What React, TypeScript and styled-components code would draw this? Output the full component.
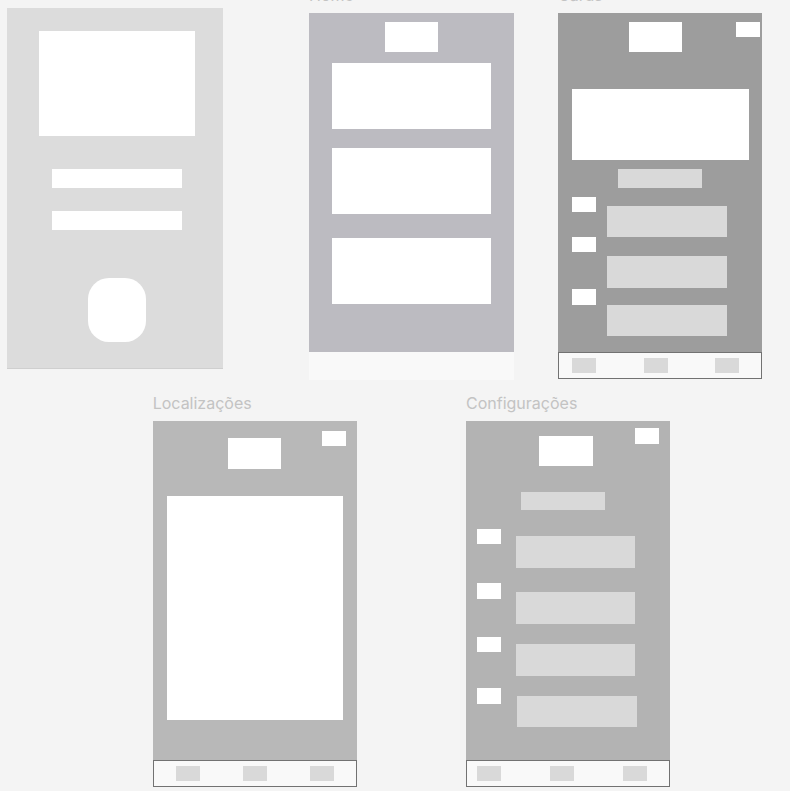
import React from "react";
import styled, { createGlobalStyle, css } from "styled-components";

const Global = createGlobalStyle`
  html, body { margin: 0; padding: 0; background: #f4f4f4; }
  body { font-family: Inter, "Noto Sans", sans-serif; }
`;

type Offset = { $mt?: number; $ml?: number };
const offset = css<Offset>`
  flex: none;
  margin-top: ${(p) => p.$mt ?? 0}px;
  margin-left: ${(p) => p.$ml ?? 0}px;
`;

const Canvas = styled.div`
  position: relative;
  width: 790px;
  height: 791px;
  overflow: hidden;
  background: #f4f4f4;
`;

const FrameGroup = styled.div<{ $x: number; $y: number; $w: number }>`
  position: absolute;
  left: ${(p) => p.$x}px;
  top: ${(p) => p.$y}px;
  width: ${(p) => p.$w}px;
  display: flex;
  flex-direction: column;
`;

const FrameLabel = styled.div`
  height: 18px;
  margin-bottom: 9px;
  font-size: 16px;
  line-height: 18px;
  color: #c3c3c3;
  white-space: nowrap;
`;

const Screen = styled.div<{ $bg: string; $h: number; $pt?: number; $center?: boolean; $pl?: number }>`
  box-sizing: border-box;
  height: ${(p) => p.$h}px;
  background: ${(p) => p.$bg};
  padding-top: ${(p) => p.$pt ?? 0}px;
  padding-left: ${(p) => p.$pl ?? 0}px;
  display: flex;
  flex-direction: column;
  align-items: ${(p) => (p.$center ? "center" : "flex-start")};
`;

const LoginScreen = styled(Screen)`
  box-shadow: 0 1px 0 #cfcfcf;
`;

const Footer = styled.div`
  height: 28px;
  background: #f9f9f9;
`;

const NavBar = styled.div<{ $pl: number; $pr: number }>`
  box-sizing: border-box;
  height: 27px;
  background: #f9f9f9;
  border: 1px solid #727272;
  display: flex;
  align-items: center;
  justify-content: space-between;
  padding: 0 ${(p) => p.$pr - 1}px 0 ${(p) => p.$pl - 1}px;
`;

const NavItem = styled.div`
  width: 24px;
  height: 15px;
  background: #d9d9d9;
`;

const Header = styled.div<{ $pl: number; $pt: number }>`
  display: flex;
  align-items: flex-start;
  padding-left: ${(p) => p.$pl}px;
  padding-top: ${(p) => p.$pt}px;
`;

const Logo = styled.div<Offset>`
  ${offset};
  width: 53.3px;
  height: 30.4px;
  background: #ffffff;
`;

const Corner = styled.div<Offset>`
  ${offset};
  width: 24px;
  height: 15.4px;
  background: #ffffff;
`;

const Hero = styled.div<Offset & { $w: number; $h: number }>`
  ${offset};
  width: ${(p) => p.$w}px;
  height: ${(p) => p.$h}px;
  background: #ffffff;
`;

const InputBar = styled.div<Offset>`
  ${offset};
  width: 129.3px;
  height: 18.7px;
  background: #ffffff;
`;

const RoundButton = styled.div<Offset>`
  ${offset};
  width: 57.7px;
  height: 64px;
  border-radius: 21px;
  background: #ffffff;
`;

const Card = styled.div<Offset>`
  ${offset};
  width: 158.4px;
  height: 65.7px;
  background: #ffffff;
`;

const Pill = styled.div<Offset>`
  ${offset};
  width: 83.5px;
  height: 18.2px;
  background: #d9d9d9;
`;

const List = styled.div<Offset>`
  ${offset};
  display: flex;
  align-items: flex-start;
`;

const Column = styled.div<Offset>`
  ${offset};
  display: flex;
  flex-direction: column;
  align-items: flex-start;
`;

const RowIcon = styled.div<Offset>`
  ${offset};
  width: 24px;
  height: 15.5px;
  background: #ffffff;
`;

const Field = styled.div<Offset>`
  ${offset};
  width: 119.6px;
  height: 31.5px;
  background: #d9d9d9;
`;

export default function App() {
  return (
    <>
      <Global />
      <Canvas>
        {/* Login */}
        <FrameGroup $x={7} $y={8} $w={216}>
          <LoginScreen $bg="#dcdcdc" $h={359.5} $pt={22.7} $pl={4} $center>
            <Hero $w={156.7} $h={105} />
            <InputBar $mt={33.3} />
            <InputBar $mt={23.3} />
            <RoundButton $mt={48} />
          </LoginScreen>
        </FrameGroup>

        {/* Home */}
        <FrameGroup $x={309} $y={13.3 - 27} $w={205}>
          <FrameLabel>Home</FrameLabel>
          <Screen $bg="#bcbbc1" $h={338.4} $pt={8.4} $center>
            <Logo />
            <Card $mt={10.9} />
            <Card $mt={19.3} />
            <Card $mt={24.7} />
          </Screen>
          <Footer />
        </FrameGroup>

        {/* Cards */}
        <FrameGroup $x={558} $y={13.3 - 27} $w={204.3}>
          <FrameLabel>Cards</FrameLabel>
          <Screen $bg="#9d9d9d" $h={338.7}>
            <Header $pl={70.7} $pt={8.7}>
              <Logo />
              <Corner $ml={54.3} />
            </Header>
            <Hero $ml={14} $mt={36.7} $w={176.7} $h={70.7} />
            <Pill $ml={60.3} $mt={9.6} />
            <List $mt={9}>
              <Column $ml={14}>
                <RowIcon />
                <RowIcon $mt={24.7} />
                <RowIcon $mt={37} />
              </Column>
              <Column $ml={11.3}>
                <Field $mt={9} />
                <Field $mt={19} />
                <Field $mt={17} />
              </Column>
            </List>
          </Screen>
          <NavBar $pl={14} $pr={23.3}>
            <NavItem />
            <NavItem />
            <NavItem />
          </NavBar>
        </FrameGroup>

        {/* Localizações */}
        <FrameGroup $x={152.7} $y={421 - 27} $w={204.3}>
          <FrameLabel>Localizações</FrameLabel>
          <Screen $bg="#b8b8b8" $h={339}>
            <Header $pl={75.3} $pt={9.7}>
              <Logo $mt={7.6} />
              <Corner $ml={40.7} />
            </Header>
            <Hero $ml={14} $mt={27.7} $w={176.3} $h={223.3} />
          </Screen>
          <NavBar $pl={23} $pr={23}>
            <NavItem />
            <NavItem />
            <NavItem />
          </NavBar>
        </FrameGroup>

        {/* Configurações */}
        <FrameGroup $x={466} $y={421 - 27} $w={204.3}>
          <FrameLabel>Configurações</FrameLabel>
          <Screen $bg="#b3b3b3" $h={339}>
            <Header $pl={73.3} $pt={7.3}>
              <Logo $mt={7.4} />
              <Corner $ml={42.3} />
            </Header>
            <Pill $ml={55} $mt={26} />
            <List $mt={18.7}>
              <Column $ml={11}>
                <RowIcon />
                <RowIcon $mt={39} />
                <RowIcon $mt={38} />
                <RowIcon $mt={36} />
              </Column>
              <Column $ml={14.7}>
                <Field $mt={7.3} />
                <Field $mt={24.6} />
                <Field $mt={20.3} />
                <Field $mt={20.3} $ml={1.3} />
              </Column>
            </List>
          </Screen>
          <NavBar $pl={11} $pr={23.3}>
            <NavItem />
            <NavItem />
            <NavItem />
          </NavBar>
        </FrameGroup>
      </Canvas>
    </>
  );
}
